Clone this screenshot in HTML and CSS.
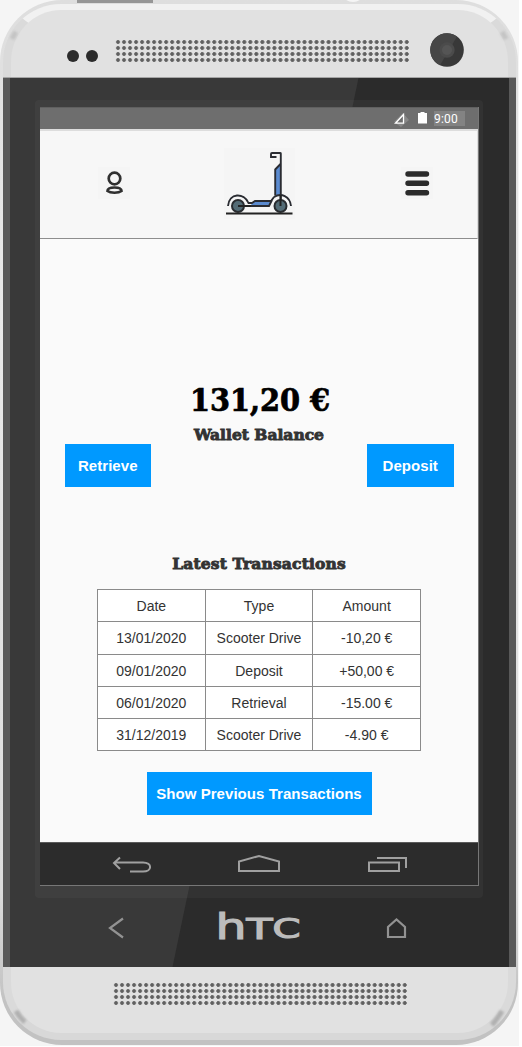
FILE: index.html
```html
<!DOCTYPE html>
<html lang="en">
<head>
<meta charset="utf-8">
<title>Wallet</title>
<link rel="stylesheet" href="styles.css">
</head>
<body>
<div class="stage">
  <div class="phone">
    <span class="power"></span>
    <span class="jack"></span>
    <div class="rim"></div>
    <svg class="glints" width="518" height="1045" viewBox="0 0 518 1045" fill="none" stroke-width="5"><path d="M12 39Q14 35 16 32M506 39Q504 35 502 32" stroke="#c4c4c4"/><path d="M16 1011Q20 1018 25 1022M502 1011Q498 1018 492 1025" stroke="#b0b0b0"/></svg>
    <div class="cap top">
      <i class="sensor"></i><i class="sensor"></i>
      <div class="grille"></div>
      <svg class="camera" width="34" height="34" viewBox="0 0 34 34"><circle cx="17" cy="17" r="16.8" fill="#383838"/><path d="M27 3.5A16.8 16.8 0 1 0 10 32.3Z" fill="#464646"/><circle cx="17" cy="17" r="7.7" fill="#4b4b4b"/><circle cx="17" cy="17" r="5" fill="#555"/></svg>
    </div>
    <div class="glass">
      <div class="shine"></div>
      <div class="bezel">
        <div class="screen">
          <div class="status">
            <svg width="16" height="20" viewBox="0 0 16 20"><path d="M0 13L9 4L15 11L7 18Z" fill="#888"/><path d="M1.5 14.2H9.5V5.5Z" fill="#6e6e6e" stroke="#fff" stroke-width="1.3"/></svg>
            <svg class="battery" width="9" height="12" viewBox="0 0 9 12"><path d="M2.500 0h4v1H9v10.500H0V1h2.500Z" fill="#fff"/></svg>
            <span class="clock">9:00</span>
          </div>
          <header class="header">
            <svg class="user" width="32" height="32" viewBox="0 0 32 32"><path d="M0 0h32v32H0z" fill="#f5f5f5"/><g fill="none" stroke="#303030" stroke-width="2.700"><circle cx="16.500" cy="11.500" r="5.800"/><path d="M9.500 24C9.500 19.300 23.500 19.300 23.500 24C20.500 26.300 12.500 26.300 9.500 24Z"/></g></svg>
            <svg class="scooter" width="71" height="71" viewBox="0 0 71 71"><path d="M0 0h71v71H0z" fill="#f5f5f5"/><path d="M51.500 21.500L56 17V48H51.500ZM26 58L30.500 53H48L45 58Z" fill="#5b8bd0"/><g fill="none" stroke="#2a2c32" stroke-width="1.900"><path d="M56.800 58V5.500Q56.800 5 56 5H48Q47 5 47 6V9H52.500M56.500 16L51.200 21.500V47.500"/><path d="M4 58C5 44.500 20 44.500 24.500 55H28L31 53H47L50 49M50 49C57 44.500 66 48 67 58M25 58H45L48 52"/></g><g fill="#546c76" stroke="#292c30" stroke-width="2"><circle cx="14" cy="58" r="6"/><circle cx="56.500" cy="58" r="6"/></g><path d="M14 58H27M56.500 47V58M2 65.500H68.500" fill="none" stroke="#222" stroke-width="2"/></svg>
            <svg class="menu" width="32" height="32" viewBox="0 0 32 32"><path d="M0 0h32v32H0z" fill="#f5f5f5"/><path d="M7 7H25.500M7 16.300H25.500M7 25.700H25.500" stroke="#2b2b2b" stroke-width="5.400" stroke-linecap="round"/></svg>
          </header>
          <main class="content">
            <div class="balance">131,20 €</div>
            <h2 class="title">Wallet Balance</h2>
            <div class="actions"><button>Retrieve</button><button>Deposit</button></div>
            <h2 class="title latest">Latest Transactions</h2>
            <div class="table">
              <span>Date</span><span>Type</span><span>Amount</span>
              <span>13/01/2020</span><span>Scooter Drive</span><span>-10,20 €</span>
              <span>09/01/2020</span><span>Deposit</span><span>+50,00 €</span>
              <span>06/01/2020</span><span>Retrieval</span><span>-15.00 €</span>
              <span>31/12/2019</span><span>Scooter Drive</span><span>-4.90 €</span>
            </div>
            <button class="more">Show Previous Transactions</button>
          </main>
          <nav class="nav">
            <svg width="438" height="42" viewBox="0 0 438 42" fill="none" stroke="#a0a0a0" stroke-width="2"><path d="M80 14.500L74 20L80 26M74 19.500H103C112.500 19.500 112.500 28.500 103 28.500H90"/><path d="M199 28V18.500L219 13L239 18.500V28Z"/><path d="M329 19.500H359V28H329ZM337 15H366V25"/></svg>
          </nav>
        </div>
      </div>
      <svg class="keys" width="513" height="68" viewBox="0 0 513 68"><path d="M120 20.500L107 30L120 39.500M385 39V29L393.500 21.500L402 29V39Z" fill="none" stroke="#929292" stroke-width="2.200"/><g class="brand"><text x="212.500" y="40.500" font-size="36" textLength="31" lengthAdjust="spacingAndGlyphs">h</text><text x="243.500" y="40.500" font-size="28" textLength="26" lengthAdjust="spacingAndGlyphs">T</text><text x="269.500" y="40" font-size="27" textLength="28" lengthAdjust="spacingAndGlyphs">C</text></g></svg>
    </div>
    <div class="cap bottom"><div class="grille"></div></div>
  </div>
</div>
</body>
</html>
```
FILE: styles.css
```css
* { box-sizing: border-box; }
body { margin: 0; background: #fff; font-family: "Liberation Sans", Arial, sans-serif; }
.stage { width: 519px; height: 1046px; background: #f5f5f5; overflow: hidden; }
.phone {
  position: relative; width: 518px; height: 1045px; border-radius: 62px; overflow: hidden;
  display: flex; flex-direction: column; align-items: center;
  background: linear-gradient(#dedede, #e8e8e8 30%, #dcdcdc 85%, #c2c2c2 96%);
}
.power { position: absolute; z-index: 2; left: 77px; top: 0; width: 76px; height: 3px; background: #969696; }
.jack { position: absolute; left: 342px; top: -17px; width: 22px; height: 19px; border-radius: 50%; background: #f5f5f5; }
.rim {
  position: absolute; left: 3px; top: 4px; width: 513px; height: 1036px;
  border: solid; border-width: 6px 8px 7px; border-color: #f1f1f1 #dadada #d8d8d8; border-radius: 58px; background: #e1e1e1;
}
.glints { position: absolute; left: 0; top: 0; filter: blur(1px); }
.cap { position: relative; width: 513px; display: flex; align-items: flex-start; }
.top { height: 78px; padding-left: 64px; border-bottom: 1px solid #a5a5a5; }
.bottom { height: 78px; padding: 15px 0 0 110px; }
.sensor { width: 12px; height: 12px; margin: 50px 7px 0 0; border-radius: 50%; background: #2b2b2b; }
.grille { width: 295px; height: 24px; background: radial-gradient(circle at center, #606060 1.2px, #747474 1.7px, transparent 2.3px) 0 0 / 6.02px 6px; }
.top .grille { margin: 39px 0 0 10px; }
.camera { margin: 33px 0 0 20px; }
.glass { position: relative; width: 513px; height: 889px; background: #2b2b2b; border: solid #595959; border-width: 0 7.500px; display: flex; flex-direction: column; align-items: center; }
.shine { position: absolute; inset: 0; background: #393939; clip-path: polygon(0 0, 349px 0, 163px 100%, 0 100%); }
.bezel { position: relative; width: 448px; height: 798px; margin: 22px 0 0; padding: 7px 4px 0 5px; background: rgba(255,255,255,.035); border-radius: 4px; }
.screen { width: 439px; height: 779px; border: solid #777; border-width: 0 1px 1px 0; display: flex; flex-direction: column; }
.status { height: 22px; background: #6e6e6e; border-top: 1px solid #606060; display: flex; align-items: center; justify-content: flex-end; padding-right: 13px; color: #fff; }
.battery { margin: 0 7px 1px 8px; }
.clock { width: 31px; height: 15px; background: #838383; font: 12px/16px Roboto, sans-serif; letter-spacing: .2px; }
.header { height: 110px; background: #f7f7f7; border: solid #ddd; border-width: 2px 1px 1px 0; border-bottom-color: #8e8e8e; display: flex; align-items: flex-start; }
.user { margin: 36px 0 0 58px; }
.scooter { margin: 17px 0 0 94px; }
.menu { margin: 36px 0 0 106px; }
.content { height: 603px; background: #fafafa; display: flex; flex-direction: column; align-items: center; padding-top: 139px; }
.balance { height: 47px; font: bold 32px/44px "DejaVu Serif Condensed", "DejaVu Serif", serif; font-stretch: condensed; color: #000; -webkit-text-stroke: .7px #000; white-space: nowrap; padding-left: 2px; }
.title { margin: 0; height: 19px; font: bold 15.5px/19px "DejaVu Serif", serif; letter-spacing: 0; color: #333; -webkit-text-stroke: .9px #333; white-space: nowrap; }
.actions { width: 389px; display: flex; justify-content: space-between; }
button { width: 86.500px; height: 43px; padding: 0; border: 0; background: #0099ff; color: #fff; font: bold 15px "Liberation Sans", Arial, sans-serif; letter-spacing: .05px; white-space: nowrap; }
.latest { margin-top: 67px; letter-spacing: .15px; }
.table { width: 324px; height: 162px; margin-top: 16px; display: grid; grid-template-columns: repeat(3, 1fr); grid-template-rows: 31px 32px 31px 31px 31px; gap: 1px; padding: 1px; background: #8a8a8a; }
.table span { background: #fff; display: flex; align-items: center; justify-content: center; font-size: 14px; color: #333; white-space: nowrap; }
.more { width: 225px; margin-top: 21px; }
.nav { height: 43px; background: #2c2c2c; border-top: 1px solid #5a5a5a; }
.nav svg, .keys { display: block; }
.keys { position: relative; margin: 0 -7.500px; }
.brand { fill: #bcbcbc; stroke: #bcbcbc; stroke-width: 1.2px; font-family: "DejaVu Sans", sans-serif; }
```
